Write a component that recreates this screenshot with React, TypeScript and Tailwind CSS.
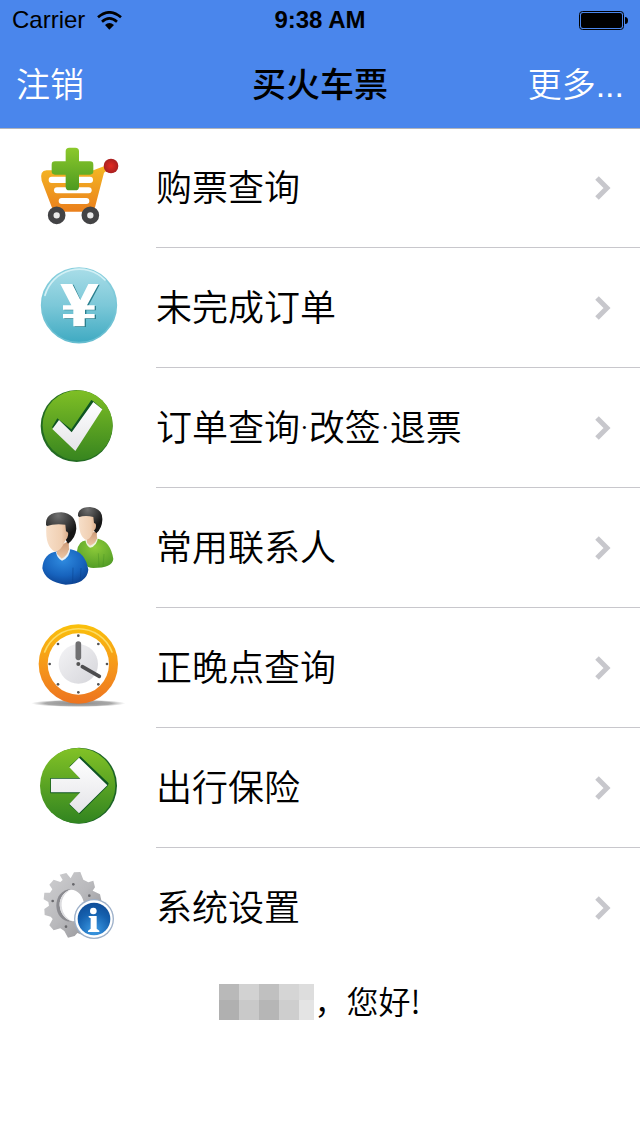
import React from "react";

const CartIcon = () => (
  <svg viewBox="0 -6 300 300" className="size-[100px] overflow-visible" aria-hidden="true">
    <defs>
      <linearGradient id="cart-body" x1="0" y1="0" x2="0" y2="1">
        <stop offset="0" stopColor="#f4b824" />
        <stop offset="1" stopColor="#ea7f1c" />
      </linearGradient>
      <linearGradient id="cart-plus" x1="0" y1="0" x2="0" y2="1">
        <stop offset="0" stopColor="#8cc92c" />
        <stop offset="1" stopColor="#4d9a20" />
      </linearGradient>
      <radialGradient id="cart-ball">
        <stop offset="0" stopColor="#e22b22" />
        <stop offset="1" stopColor="#a81f20" />
      </radialGradient>
    </defs>
    <path
      d="M50 91H190L226 77L236 88L222 98L195 202Q192 215 180 215H82Q69 215 66 203L35 122Q28 92 50 91Z"
      fill="url(#cart-body)"
    />
    <rect x="56" y="110" width="133" height="19" rx="9" fill="#fff" />
    <rect x="72" y="142" width="113" height="18" rx="9" fill="#fff" />
    <rect x="86" y="174" width="92" height="18" rx="9" fill="#fff" />
    <path
      d="M118 23H136Q147 23 147 34V64H180Q190 64 190 74V94Q190 104 180 104H147V140Q147 151 136 151H118Q107 151 107 140V104H75Q65 104 65 94V74Q65 64 75 64H107V34Q107 23 118 23Z"
      fill="url(#cart-plus)"
    />
    <circle cx="243" cy="78" r="22" fill="url(#cart-ball)" />
    <circle cx="80" cy="226" r="18" fill="#e9e9e9" stroke="#434345" strokeWidth="17" />
    <circle cx="181" cy="226" r="18" fill="#e9e9e9" stroke="#434345" strokeWidth="17" />
  </svg>
);

const YenIcon = () => (
  <svg viewBox="0 0 300 300" className="size-[100px] overflow-visible" aria-hidden="true">
    <defs>
      <linearGradient id="yen-disc" x1="0" y1="0" x2="0" y2="1">
        <stop offset="0" stopColor="#a9dde8" />
        <stop offset="0.5" stopColor="#7cc8d8" />
        <stop offset="1" stopColor="#3faac2" />
      </linearGradient>
      <linearGradient id="yen-rim" x1="0" y1="0" x2="0" y2="1">
        <stop offset="0" stopColor="#8bd0de" />
        <stop offset="1" stopColor="#66bdd0" />
      </linearGradient>
    </defs>
    <circle cx="147" cy="142" r="112" fill="url(#yen-disc)" stroke="url(#yen-rim)" strokeWidth="5" />
    <path d="M45 112A107 107 0 0 1 225 66" fill="none" stroke="#d3f0f5" strokeWidth="5" strokeLinecap="round" />
    <path
      d="M95 80H131L153 128L179 80H209L175 144H198V157H169V170H198V183H168V207H134V183H103V170H134V157H103V144H128Z"
      fill="#2b7f8e"
    />
    <path
      d="M91 78H127L151 126L175 78H206L171 142H194V155H165V168H194V181H164V205H130V181H99V168H130V155H99V142H124Z"
      fill="#fff"
    />
  </svg>
);

const CheckIcon = () => (
  <svg viewBox="0 0 300 300" className="size-[100px] overflow-visible" aria-hidden="true">
    <defs>
      <linearGradient id="check-disc" x1="0" y1="0" x2="0" y2="1">
        <stop offset="0" stopColor="#7fbf25" />
        <stop offset="1" stopColor="#37851f" />
      </linearGradient>
      <linearGradient id="check-mark" x1="0" y1="0" x2="0" y2="1">
        <stop offset="0" stopColor="#fff" />
        <stop offset="1" stopColor="#e4e4e8" />
      </linearGradient>
    </defs>
    <circle cx="140" cy="144" r="108" fill="#236b22" />
    <circle cx="143" cy="142" r="105" fill="url(#check-disc)" />
    <path d="M66 148L82 121L88 126L124 154L184 66L190 70L216 92L136 216Z" fill="#0e5522" />
    <path d="M67 153L87 126L125 163L190 72L217 94L136 219Z" fill="url(#check-mark)" />
  </svg>
);

const ContactsIcon = () => (
  <svg viewBox="0 0 300 300" className="size-[100px] overflow-visible" aria-hidden="true">
    <defs>
      <radialGradient id="body-blue" cx="0.45" cy="0.3" r="0.75">
        <stop offset="0" stopColor="#2f8be0" />
        <stop offset="0.6" stopColor="#1763bd" />
        <stop offset="1" stopColor="#0b3f8e" />
      </radialGradient>
      <radialGradient id="body-green" cx="0.5" cy="0.3" r="0.8">
        <stop offset="0" stopColor="#8ecb3a" />
        <stop offset="1" stopColor="#4b9724" />
      </radialGradient>
      <linearGradient id="face" x1="0" y1="0" x2="1" y2="0">
        <stop offset="0" stopColor="#f7dfc9" />
        <stop offset="0.7" stopColor="#f0cfb2" />
        <stop offset="1" stopColor="#d9ab88" />
      </linearGradient>
      <linearGradient id="neck" x1="0" y1="0" x2="0" y2="1">
        <stop offset="0" stopColor="#c99672" />
        <stop offset="1" stopColor="#eec7a6" />
      </linearGradient>
      <radialGradient id="hair" cx="0.4" cy="0.1" r="0.7">
        <stop offset="0" stopColor="#707070" />
        <stop offset="1" stopColor="#161616" />
      </radialGradient>
    </defs>
    <path d="M140 164Q143 128 170 127L204 122Q242 130 250 183Q247 210 190 210Q158 208 140 164Z" fill="url(#body-green)" />
    <path d="M205 166L207 207M222 168L219 206" stroke="#3f8b22" strokeWidth="2" opacity="0.5" />
    <path d="M166 126L204 118Q201 146 180 149Q169 144 166 126Z" fill="#ecf5df" />
    <path d="M170 112L200 98L201 121Q196 139 180 143L171 134Z" fill="url(#neck)" />
    <path d="M144 54Q142 28 180 27Q219 31 217 66Q216 91 199 106L186 92Z" fill="url(#hair)" />
    <path d="M146 58Q165 51 190 57L192 75Q201 76 197 91L191 100Q181 125 168 126Q145 116 146 58Z" fill="url(#face)" />
    <path d="M37 211Q40 166 82 160L122 154Q166 162 175 215Q171 257 107 260Q45 252 37 211Z" fill="url(#body-blue)" />
    <path d="M129 209L128 253M153 210L151 245" stroke="#0b438d" strokeWidth="3" opacity="0.5" />
    <path d="M78 162L121 150Q120 179 96 188Q81 182 78 162Z" fill="#e8f1f8" />
    <path d="M80 150L116 128L117 154Q110 177 95 182L81 168Z" fill="url(#neck)" />
    <path d="M48 82Q45 43 94 43Q138 47 139 92Q137 120 114 137L100 113Z" fill="url(#hair)" />
    <path d="M49 85Q72 76 106 80L108 100Q119 102 112 119L105 130Q92 160 75 161Q45 147 49 85Z" fill="url(#face)" />
  </svg>
);

const ClockIcon = () => (
  <svg viewBox="15 9 300 300" className="size-[100px] overflow-visible" aria-hidden="true">
    <defs>
      <linearGradient id="clock-ring" x1="0" y1="0" x2="0" y2="1">
        <stop offset="0" stopColor="#fac10b" />
        <stop offset="0.5" stopColor="#f6991a" />
        <stop offset="1" stopColor="#ed7420" />
      </linearGradient>
      <linearGradient id="clock-face" x1="0" y1="0" x2="1" y2="1">
        <stop offset="0" stopColor="#f4f4f6" />
        <stop offset="1" stopColor="#d5d5da" />
      </linearGradient>
      <radialGradient id="clock-shadow">
        <stop offset="0" stopColor="#8a8a8a" />
        <stop offset="0.7" stopColor="#a0a0a0" stopOpacity="0.9" />
        <stop offset="1" stopColor="#bbb" stopOpacity="0" />
      </radialGradient>
    </defs>
    <ellipse cx="160" cy="265" rx="142" ry="11" fill="url(#clock-shadow)" />
    <circle cx="160" cy="147" r="119" fill="url(#clock-ring)" />
    <path d="M59 111A108 108 0 0 1 261 111" fill="none" stroke="#fddc62" strokeWidth="5" strokeLinecap="round" />
    <circle cx="160" cy="147" r="92" fill="#fff" />
    <circle cx="160" cy="147" r="59" fill="url(#clock-face)" />
    <g fill="#555">
      <circle cx="160" cy="62" r="4" />
      <circle cx="220" cy="87" r="4" />
      <circle cx="246" cy="147" r="4" />
      <circle cx="220" cy="208" r="4" />
      <circle cx="160" cy="232" r="4" />
      <circle cx="99" cy="208" r="4" />
      <circle cx="74" cy="147" r="4" />
      <circle cx="99" cy="87" r="4" />
      <circle cx="160" cy="147" r="6" />
    </g>
    <path d="M160 87V127" stroke="#707072" strokeWidth="17" strokeLinecap="round" />
    <path d="M172 155L223 184" stroke="#4d4d4f" strokeWidth="11" strokeLinecap="round" />
  </svg>
);

const ArrowIcon = () => (
  <svg viewBox="0 0 300 300" className="size-[100px] overflow-visible" aria-hidden="true">
    <defs>
      <linearGradient id="arrow-disc" x1="0" y1="0" x2="0" y2="1">
        <stop offset="0" stopColor="#82c226" />
        <stop offset="1" stopColor="#318420" />
      </linearGradient>
      <linearGradient id="arrow-mark" x1="0" y1="0" x2="0" y2="1">
        <stop offset="0" stopColor="#fff" />
        <stop offset="1" stopColor="#e4e4e8" />
      </linearGradient>
    </defs>
    <circle cx="147" cy="143" r="114" fill="#1c6426" />
    <circle cx="143" cy="143" r="113" fill="url(#arrow-disc)" />
    <path d="M118 85L151 55L236 136L233 144L149 228L117 200L150 166H61V120H151Z" fill="#0e5522" />
    <path d="M118 88L147 59L232 142L147 226L118 198L151 163H63V122H151Z" fill="url(#arrow-mark)" />
  </svg>
);

const SettingsIcon = () => (
  <svg viewBox="0 0 300 300" className="size-[100px] overflow-visible" aria-hidden="true">
    <defs>
      <linearGradient id="gear" x1="0" y1="0" x2="1" y2="1">
        <stop offset="0" stopColor="#d0d0d2" />
        <stop offset="0.5" stopColor="#b9b9bc" />
        <stop offset="1" stopColor="#8b8b90" />
      </linearGradient>
      <radialGradient id="info" cx="0.5" cy="0.85" r="0.9">
        <stop offset="0" stopColor="#3d9ce6" />
        <stop offset="0.6" stopColor="#1560ae" />
        <stop offset="1" stopColor="#0f4a94" />
      </radialGradient>
    </defs>
    <path
      fillRule="evenodd"
      fill="url(#gear)"
      d="M89 50L109 45L122 61L132 43L151 42L160 65L175 73L190 68L195 88L188 98L210 109L215 132L203 142L202 180L160 232L142 225L134 234L114 239L103 219L91 211L71 217L58 202L68 183L62 176L44 171L43 153L57 143L55 132L41 124L43 104L60 104L67 94L58 80L71 65L91 72L98 66ZM121 95C94 96 80 118 82 144C84 174 108 193 128 190C150 188 164 168 163 143C161 115 144 94 121 95Z"
    />
    <path
      d="M130 191C98 194 80 171 79 143C79 117 94 94 124 94C104 99 88 119 89 142C91 168 106 186 130 191Z"
      fill="#8a8a8f"
    />
    <path d="M132 191C109 189 90 168 89 142C88 120 102 100 124 95C106 102 94 120 95 143C97 169 113 185 132 191Z" fill="#dcdcdf" />
    <g fill="#68686c">
      <circle cx="130" cy="79" r="4" />
      <circle cx="68" cy="129" r="4" />
      <circle cx="108" cy="206" r="4" />
      <circle cx="178" cy="113" r="4" />
    </g>
    <circle cx="192" cy="183" r="60" fill="#9db0c9" />
    <circle cx="192" cy="183" r="56" fill="#fff" />
    <circle cx="192" cy="183" r="49" fill="url(#info)" />
    <circle cx="190" cy="159" r="10" fill="#fff" />
    <path d="M176 174H200V212L208 218V222H174V218L182 212V181L176 178Z" fill="#fff" />
  </svg>
);

const menuItems = [
  { label: "购票查询", Icon: CartIcon },
  { label: "未完成订单", Icon: YenIcon },
  { label: "订单查询·改签·退票", Icon: CheckIcon },
  { label: "常用联系人", Icon: ContactsIcon },
  { label: "正晚点查询", Icon: ClockIcon },
  { label: "出行保险", Icon: ArrowIcon },
  { label: "系统设置", Icon: SettingsIcon },
];

const StatusBar = () => (
  <div className="grid h-10 grid-cols-3 items-center px-3 font-['Liberation_Sans',sans-serif] text-2xl">
    <div className="flex items-center gap-3">
      <span>Carrier</span>
      <svg viewBox="0 0 75 57" className="h-[19px] w-[25px]" aria-label="Wi-Fi">
        <path d="M3 19Q37 -11 72 19" fill="none" stroke="#000" strokeWidth="8" />
        <path d="M15 32Q37 12 60 32" fill="none" stroke="#000" strokeWidth="8" />
        <path d="M24 42Q37 30 51 42L37 56Z" />
      </svg>
    </div>
    <span className="text-center font-bold">9:38 AM</span>
    <svg viewBox="0 0 49 19" className="h-[19px] w-[49px] justify-self-end" aria-label="Battery">
      <rect x="0.5" y="0.5" width="44" height="18" rx="3" fill="none" stroke="#000" />
      <rect x="2" y="2" width="41" height="15" rx="2" />
      <path d="M46 6Q49 6 49 9.5Q49 13 46 13Z" />
    </svg>
  </div>
);

const Header = () => (
  <header className="bg-[#4a86ec] shadow-[0_1px_0_#b2b4ba]">
    <StatusBar />
    <nav className="grid h-[88px] grid-cols-3 items-center px-4 pt-0.5 font-['Liberation_Sans','Noto_Sans_CJK_SC',sans-serif] text-[34px]">
      <button type="button" className="justify-self-start font-[350] text-white">
        注销
      </button>
      <h1 className="text-center font-medium">买火车票</h1>
      <button type="button" className="justify-self-end font-[350] text-white">
        更多...
      </button>
    </nav>
  </header>
);

const Chevron = () => (
  <svg viewBox="0 0 18 26" className="h-[26px] w-[18px]" aria-hidden="true">
    <path d="M3 3L13 13L3 23" fill="none" stroke="#c7c7cc" strokeWidth="5" />
  </svg>
);

const App: React.FC = () => {
  return (
    <div className="min-h-screen bg-white font-['Noto_Sans_CJK_SC',sans-serif] text-black">
      <Header />
      <main>
        <ul>
          {menuItems.map(({ label, Icon }) => (
            <li key={label} className="group">
              <a href="#" className="flex h-[120px]">
                <span className="flex w-[156px] shrink-0 items-center pl-[30px]">
                  <Icon />
                </span>
                <span className="flex flex-1 items-center justify-between border-b border-[#c8c7cc] pr-7 font-['Roboto','Noto_Sans_CJK_SC',sans-serif] text-4xl font-[350] group-last:border-transparent">
                  <span className="pt-0.5">{label}</span>
                  <Chevron />
                </span>
              </a>
            </li>
          ))}
        </ul>
        <p className="flex items-center justify-center pt-2 text-[32px] font-[350]">
          <span className="grid grid-cols-[20px_20px_20px_20px_15px] grid-rows-[16px_20px]">
            <span className="bg-[#b9b9b9]" />
            <span className="bg-[#d2d2d2]" />
            <span className="bg-[#c0c0c0]" />
            <span className="bg-[#d5d5d5]" />
            <span className="bg-[#dddddd]" />
            <span className="bg-[#b0b0b0]" />
            <span className="bg-[#c9c9c9]" />
            <span className="bg-[#b6b6b6]" />
            <span className="bg-[#cecece]" />
            <span className="bg-[#e4e4e4]" />
          </span>
          <span className="pb-1">，您好!</span>
        </p>
      </main>
    </div>
  );
};

export default App;
